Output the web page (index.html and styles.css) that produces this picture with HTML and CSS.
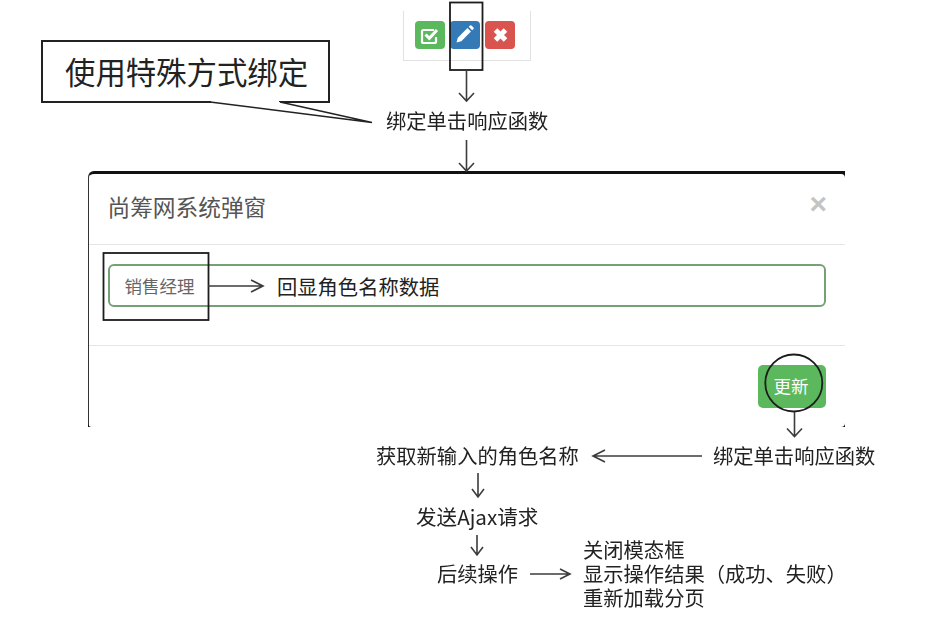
FILE: index.html
```html
<!DOCTYPE html>
<html lang="zh-CN">
<head>
<meta charset="utf-8">
<title>尚筹网系统弹窗</title>
<link rel="stylesheet" href="styles.css">
</head>
<body>
<div class="canvas">
  <div class="toolbar">
    <span class="btn btn-green">
      <svg viewBox="0 0 30 28" width="30" height="28"><path d="M19 9H8.500A1.500 1.500 0 0 0 7 10.500V20.500A1.500 1.500 0 0 0 8.500 22H19.500A1.500 1.500 0 0 0 21 20.500V16" fill="none" stroke="#fff" stroke-width="2.200"/><path d="M10.500 13.500l3.800 3.800L22 9" fill="none" stroke="#fff" stroke-width="3"/></svg>
    </span>
    <span class="btn btn-blue">
      <svg viewBox="0 0 30 28" width="30" height="28"><path d="M6.500 21.500l1.300-4.800L17.500 7l3.500 3.500-9.700 9.700z" fill="#fff"/><path d="M18.700 5.800l1.300-1.300a1 1 0 0 1 1.400 0l2.100 2.100a1 1 0 0 1 0 1.400l-1.300 1.300z" fill="#fff"/></svg>
    </span>
    <span class="btn btn-red">
      <svg viewBox="0 0 30 28" width="30" height="28"><path d="M10.500 9l10 10M20.500 9l-10 10" stroke="#fff" stroke-width="5" fill="none"/></svg>
    </span>
  </div>

  <div class="callout">使用特殊方式绑定</div>

  <span class="label t-bind-top">绑定单击响应函数</span>

  <div class="modal">
    <div class="modal-head">
      <span class="modal-title">尚筹网系统弹窗</span>
      <span class="modal-close">×</span>
    </div>
    <div class="modal-body">
      <div class="field"><span class="field-value">销售经理</span></div>
    </div>
    <div class="modal-foot">
      <span class="save">更新</span>
    </div>
  </div>

  <span class="label t-echo">回显角色名称数据</span>
  <span class="label t-bind-low">绑定单击响应函数</span>
  <span class="label t-fetch">获取新输入的角色名称</span>
  <span class="label t-ajax">发送Ajax请求</span>
  <span class="label t-next">后续操作</span>
  <div class="label t-list">
    <div>关闭模态框</div>
    <div>显示操作结果（成功、失败）</div>
    <div>重新加载分页</div>
  </div>

  <svg class="overlay" viewBox="0 0 929 630" width="929" height="630">
    <g class="ink-box">
      <rect x="450" y="2.500" width="32.500" height="67.500"/>
      <rect x="103.500" y="253" width="105" height="67"/>
      <circle cx="793.800" cy="383" r="28.500"/>
    </g>
    <path class="tail-gap" d="M211 102H279"/>
    <path class="tail" d="M210 102L372 122.500L280 102"/>
    <g class="corners">
      <path d="M841 174H845V178Q845 174 841 174Z"/>
      <path d="M845 423V427H841Q845 427 845 423Z"/>
      <path d="M88 423V427H92Q88 427 88 423Z"/>
    </g>
    <g class="arrow">
      <path d="M466.500 70V101M459 93l7.500 8l7.500-8"/>
      <path d="M466.500 140V171M459 163l7.500 8l7.500-8"/>
      <path d="M208 286H263M251 280l12 6l-12 6"/>
      <path d="M794.500 412V436.500M787 428.500l7.500 8l7.500-8"/>
      <path d="M702 456H593M605 450l-12 6l12 6"/>
      <path d="M478 473V497M472 489l6 8l6-8"/>
      <path d="M477 535V555M471 547l6 8l6-8"/>
      <path d="M530 574H570M560 569l10 5l-10 5"/>
    </g>
  </svg>
</div>
</body>
</html>
```
FILE: styles.css
```css
html, body {
  margin: 0;
  padding: 0;
  background: #fff;
}

.canvas {
  position: relative;
  width: 929px;
  height: 630px;
  overflow: hidden;
  font-family: "Noto Sans CJK SC", "Noto Sans", sans-serif;
  color: #222;
  filter: blur(0.3px);
}

.toolbar {
  position: absolute;
  left: 403px;
  top: 11px;
  width: 128px;
  height: 50px;
  box-sizing: border-box;
  padding: 10px 0 0 11px;
  display: flex;
  gap: 5px;
  align-items: flex-start;
  border: 1px solid #e2e2e2;
  border-top: 0;
}

.btn {
  display: flex;
  width: 30px;
  height: 28px;
  border-radius: 4px;
}

.btn-green { background: #5cb85c; }
.btn-blue { background: #337ab7; }
.btn-red { background: #d9534f; }

.callout {
  position: absolute;
  left: 41px;
  top: 40px;
  width: 289px;
  height: 63px;
  box-sizing: border-box;
  border: 2px solid #222;
  background: #fff;
  font-size: 30.400px;
  line-height: 59px;
  padding-left: 22px;
  white-space: nowrap;
}

.label {
  position: absolute;
  font-size: 20.300px;
  line-height: 24px;
  white-space: nowrap;
}

.t-bind-top { left: 386px; top: 108px; }
.t-echo { left: 277px; top: 274px; }
.t-bind-low { left: 713px; top: 443px; }
.t-fetch { left: 376px; top: 443px; }
.t-ajax { left: 416px; top: 504px; font-size: 20.600px; }
.t-next { left: 437px; top: 561px; }
.t-list { left: 583px; top: 537px; }

.modal {
  position: absolute;
  left: 88px;
  top: 171px;
  width: 757px;
  height: 256px;
  box-sizing: border-box;
  display: flex;
  flex-direction: column;
  background: #fff;
  border-top: 3px solid #111;
  border-left: 1.500px solid #333;
  border-radius: 6px 0 0 0;
}

.modal-head {
  height: 71px;
  box-sizing: border-box;
  display: flex;
  align-items: center;
  justify-content: space-between;
  padding: 0 18px 5px 18.500px;
  border-bottom: 1px solid #e5e5e5;
}

.modal-title {
  font-size: 22.700px;
  line-height: 32px;
  color: #555;
}

.modal-close {
  font-family: "Liberation Sans", sans-serif;
  font-size: 30px;
  font-weight: 700;
  line-height: 30px;
  color: #c4c4c4;
  margin-bottom: 6px;
}

.modal-body {
  height: 101px;
  box-sizing: border-box;
  padding: 19px 19px 0 18.500px;
  border-bottom: 1px solid #e5e5e5;
}

.field {
  height: 43px;
  box-sizing: border-box;
  border: 2px solid #76a076;
  border-radius: 6px;
  display: flex;
  align-items: center;
  padding-left: 15px;
}

.field-value {
  font-size: 17.500px;
  color: #666;
}

.modal-foot {
  display: flex;
  justify-content: flex-end;
  padding: 19px 19px 0 0;
}

.save {
  width: 68px;
  height: 43px;
  box-sizing: border-box;
  padding-right: 2px;
  border-radius: 5px;
  background: #5cb85c;
  color: #fff;
  font-size: 17.500px;
  line-height: 41px;
  text-align: center;
}

.overlay {
  position: absolute;
  left: 0;
  top: 0;
  fill: none;
}

.ink-box {
  stroke: #1c1c1c;
  stroke-width: 1.800;
}

.tail-gap {
  stroke: #fff;
  stroke-width: 3;
}

.tail {
  stroke: #222;
  stroke-width: 1.500;
  fill: #fff;
}

.corners {
  fill: #111;
}

.arrow {
  stroke: #3c3c3c;
  stroke-width: 1.600;
}
```
